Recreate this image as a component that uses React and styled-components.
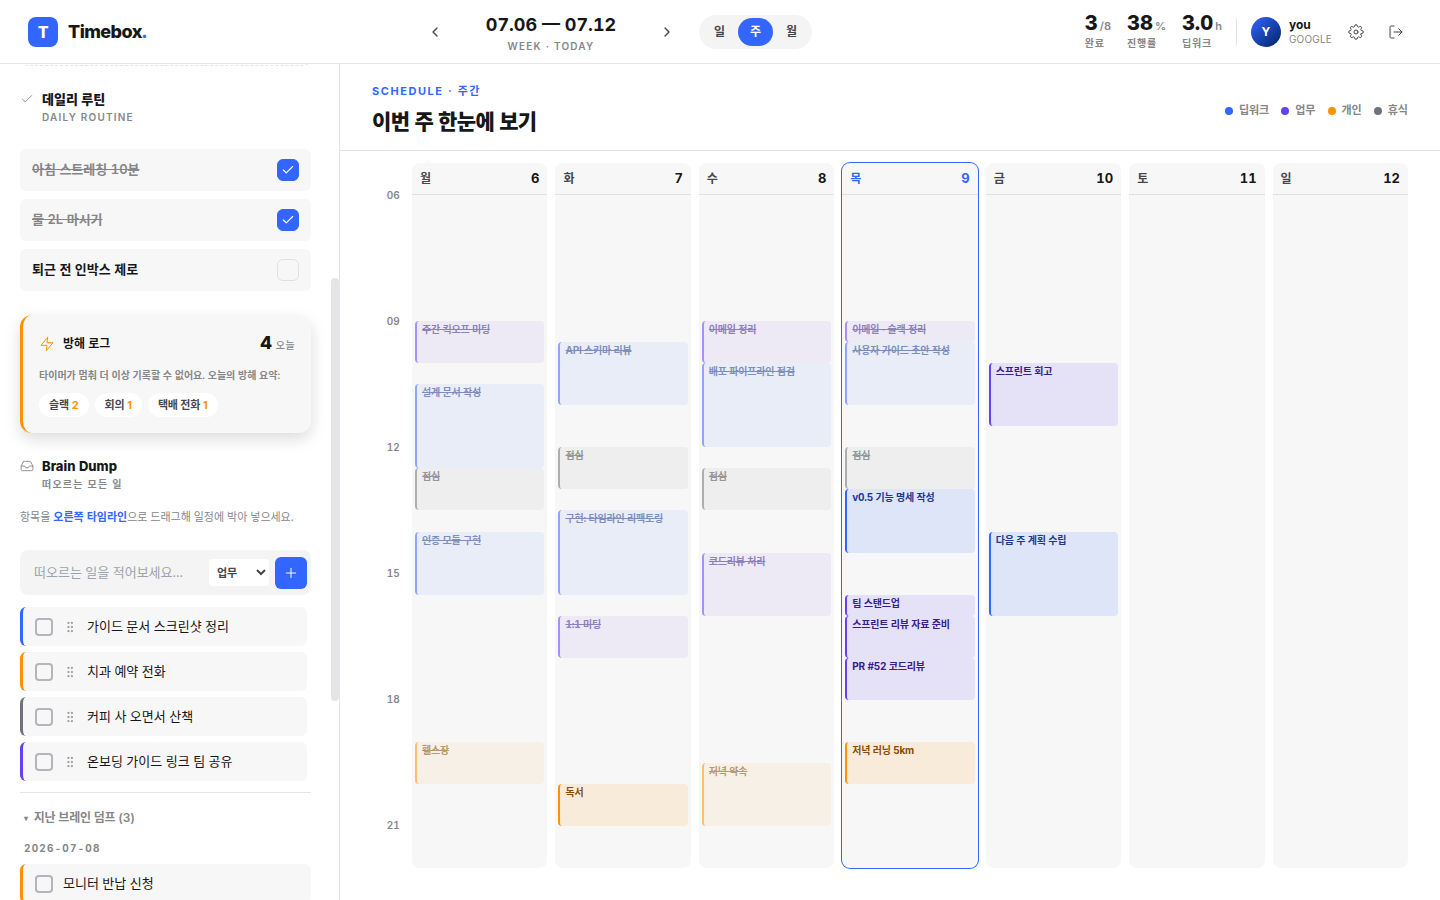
import React from "react";
import styled, { createGlobalStyle, css } from "styled-components";
import {
  FiCheck,
  FiChevronLeft,
  FiChevronRight,
  FiInbox,
  FiLogOut,
  FiPlus,
  FiSettings,
  FiZap,
} from "react-icons/fi";
import { GripVertical } from "lucide-react";

const gray = "#868689";
const line = "#e5e5e7";

const GlobalStyle = createGlobalStyle`
  *, *::before, *::after { box-sizing: border-box; }
  body {
    margin: 0;
    background: #fff;
    color: #171719;
    font-family: Inter, "Noto Sans CJK KR", sans-serif;
    font-size: 13px;
    line-height: 1.5;
    font-variant-numeric: tabular-nums;
  }
  button, input, select { font: inherit; color: inherit; margin: 0; }
  button { border: 0; padding: 0; background: none; cursor: pointer; }
  h1, h2, h3, p, ul { margin: 0; padding: 0; list-style: none; }
`;

const tones = {
  deep: { base: "#3366ff", tint: "rgba(51,102,255,.12)", ink: "#1a3a8f" },
  work: { base: "#6541f2", tint: "rgba(101,65,242,.12)", ink: "#36218a" },
  life: { base: "#ff9200", tint: "rgba(255,146,0,.12)", ink: "#8a4b00" },
  rest: { base: "#70737c", tint: "rgba(112,115,124,.12)", ink: "#46474c" },
};

const Page = styled.div`
  height: 100vh;
  display: flex;
  flex-direction: column;
`;

/* ---------- top bar ---------- */
const TopBar = styled.header`
  flex: none;
  height: 64px;
  padding: 0 28px;
  display: flex;
  align-items: center;
  justify-content: space-between;
  border-bottom: 1px solid ${line};
`;
const Brand = styled.a`
  display: flex;
  align-items: center;
  gap: 10px;
  color: inherit;
  text-decoration: none;
  font-size: 18px;
  font-weight: 800;
  letter-spacing: -0.03em;
`;
const BrandMark = styled.span`
  width: 30px;
  height: 30px;
  display: grid;
  place-items: center;
  border-radius: 8px;
  background: #3366ff;
  color: #fff;
  font-size: 16px;
`;
const Accent = styled.span`
  color: #3366ff;
`;
const NavGroup = styled.nav`
  display: flex;
  align-items: center;
  gap: 16px;
`;
const Stepper = styled.div`
  display: flex;
  align-items: center;
  gap: 10px;
`;
const IconButton = styled.button`
  width: 32px;
  height: 32px;
  display: grid;
  place-items: center;
  border-radius: 8px;
  color: #46474c;
  font-size: 16px;
`;
const RangeLabel = styled.div`
  width: 180px;
  display: flex;
  flex-direction: column;
  align-items: center;
`;
const RangeDates = styled.strong`
  font-size: 18px;
  line-height: 28px;
  font-weight: 700;
`;
const Caption = styled.span`
  font-size: 10px;
  line-height: ${(p) => p.$line || 14}px;
  font-weight: 600;
  letter-spacing: ${(p) => p.$track || "0.12em"};
  color: ${gray};
`;
const Segments = styled.div`
  display: flex;
  gap: 1px;
  padding: 3px;
  border-radius: 17px;
  background: #f4f4f5;
`;
const Segment = styled.button`
  height: 28px;
  padding: 0 12px;
  border-radius: 14px;
  font-size: 12px;
  font-weight: 600;
  color: ${(p) => (p.$active ? "#fff" : "#46474c")};
  background: ${(p) => (p.$active ? "#3366ff" : "transparent")};
`;
const AccountArea = styled.div`
  display: flex;
  align-items: center;
  gap: 14px;
`;
const Stats = styled.div`
  display: flex;
  gap: 16px;
`;
const Stat = styled.div`
  display: flex;
  flex-direction: column;
`;
const StatValue = styled.strong`
  font-size: 20px;
  line-height: 20px;
  font-weight: 800;
`;
const StatUnit = styled.span`
  margin-left: 2px;
  font-size: 11px;
  font-weight: 600;
  color: ${gray};
`;
const Divider = styled.div`
  width: 1px;
  height: 28px;
  background: ${line};
`;
const Account = styled.div`
  display: flex;
  align-items: center;
  gap: 8px;
`;
const Avatar = styled.span`
  width: 30px;
  height: 30px;
  display: grid;
  place-items: center;
  border-radius: 50%;
  background: linear-gradient(135deg, #3366ff, #002266);
  color: #fff;
  font-size: 12px;
  font-weight: 700;
`;
const AccountText = styled.span`
  display: flex;
  flex-direction: column;
  font-size: 12px;
  line-height: 15px;
  font-weight: 700;
`;
const Provider = styled.span`
  font-size: 10px;
  font-weight: 400;
  letter-spacing: 0.02em;
  color: ${gray};
`;

/* ---------- sidebar ---------- */
const Body = styled.div`
  flex: 1;
  min-height: 0;
  display: flex;
`;
const Sidebar = styled.aside`
  flex: none;
  width: 340px;
  display: flex;
  border-right: 1px solid ${line};
  overflow: hidden;
`;
const SideContent = styled.div`
  flex: 1;
  min-width: 0;
  padding: 0 20px;
`;
const Track = styled.div`
  width: 8px;
  display: flex;
  flex-direction: column;
`;
const TrackSpace = styled.div`
  flex: ${(p) => p.$share} 0 0;
`;
const Thumb = styled.div`
  flex: 423 0 0;
  border-radius: 4px;
  background: ${line};
`;
const DropZone = styled.div`
  height: 22px;
  margin-top: -20px;
  border: 1px dashed ${line};
  border-radius: 8px;
`;
const SectionHead = styled.div`
  display: grid;
  grid-template-columns: 14px 1fr;
  column-gap: 8px;
  align-items: center;
  margin-top: 23px;
  color: ${gray};
  font-size: 14px;
`;
const SectionTitle = styled.h2`
  font-size: 13px;
  line-height: 20px;
  font-weight: 800;
  color: #171719;
`;
const SectionNote = styled(Caption)`
  grid-column: 2;
`;
const RoutineList = styled.ul`
  margin-top: 24px;
  display: grid;
  gap: 8px;
`;
const Routine = styled.label`
  height: 42px;
  padding: 0 12px;
  display: flex;
  align-items: center;
  justify-content: space-between;
  border-radius: 6px;
  background: #f7f7f7;
  font-weight: 600;
  color: ${(p) => (p.$done ? gray : "#171719")};
  text-decoration: ${(p) => (p.$done ? "line-through" : "none")};
`;
const CheckWrap = styled.span`
  display: grid;
  place-items: center;
  color: #fff;
  font-size: 14px;
  > * { grid-area: 1 / 1; }
  > svg { pointer-events: none; z-index: 1; }
`;
const RoutineBox = styled.input`
  appearance: none;
  width: 22px;
  height: 22px;
  border: 1px solid #e0e0e2;
  border-radius: 6px;
  &:checked { background: #3366ff; border-color: #3366ff; }
`;
const LogCard = styled.section`
  margin-top: 24px;
  padding: 16px;
  border-left: 3px solid #ff9200;
  border-radius: 12px;
  background: #f7f7f7;
  box-shadow: 0 6px 16px rgba(0, 0, 0, 0.14);
`;
const LogHead = styled.div`
  height: 26px;
  display: flex;
  align-items: center;
  gap: 8px;
  color: #ff9200;
  font-size: 16px;
`;
const LogTitle = styled.h2`
  flex: 1;
  font-size: 12px;
  font-weight: 700;
  color: #171719;
`;
const LogCount = styled.strong`
  font-size: 18px;
  line-height: 26px;
  font-weight: 800;
  color: #171719;
`;
const LogUnit = styled.span`
  margin-left: 4px;
  font-size: 10px;
  font-weight: 500;
  letter-spacing: 0.04em;
  color: ${gray};
`;
const LogText = styled.p`
  margin-top: 8px;
  font-size: 10px;
  line-height: 20px;
  font-weight: 600;
  color: ${gray};
  white-space: nowrap;
`;
const Chips = styled.ul`
  margin-top: 8px;
  display: flex;
  gap: 6px;
`;
const Chip = styled.li`
  height: 24px;
  padding: 0 10px;
  border-radius: 12px;
  background: #fff;
  font-size: 11px;
  line-height: 24px;
  font-weight: 600;
  letter-spacing: -0.02em;
  font-variant-numeric: normal;
  color: #46474c;
`;
const ChipCount = styled.span`
  margin-left: 3px;
  font-weight: 700;
  color: #ff9200;
`;
const Hint = styled.p`
  margin-top: 14px;
  font-size: 11px;
  line-height: 22px;
  color: ${gray};
  white-space: nowrap;
  b { font-weight: 700; color: #3366ff; }
`;
const AddForm = styled.form`
  height: 45px;
  margin-top: 22px;
  padding: 0 4px 0 14px;
  display: flex;
  align-items: center;
  gap: 6px;
  border-radius: 8px;
  background: #f4f4f5;
`;
const AddInput = styled.input`
  flex: 1;
  min-width: 0;
  padding: 0;
  border: 0;
  outline: 0;
  background: none;
  &::placeholder { color: #9ca3af; }
`;
const AddSelect = styled.select`
  width: 60px;
  height: 27px;
  padding: 0 0 0 4px;
  border: 0;
  border-radius: 4px;
  background: #fff;
  font-size: 11px;
  font-weight: 600;
  color: #46474c;
`;
const AddButton = styled.button`
  width: 32px;
  height: 32px;
  display: grid;
  place-items: center;
  border-radius: 6px;
  background: #3366ff;
  color: #fff;
  font-size: 16px;
`;
const DumpList = styled.ul`
  margin-top: 12px;
  padding-right: ${(p) => (p.$inset ? 4 : 0)}px;
  display: grid;
  gap: 6px;
`;
const DumpItem = styled.li`
  height: 39px;
  padding-left: 12px;
  display: flex;
  align-items: center;
  gap: 10px;
  border-left: 3px solid ${(p) => tones[p.$tone].base};
  border-radius: 6px;
  background: #f7f7f7;
  color: ${gray};
`;
const DumpBox = styled.input`
  appearance: none;
  width: 18px;
  height: 18px;
  border: 2px solid #b4b4ba;
  border-radius: 4px;
`;
const DumpText = styled.label`
  color: #171719;
`;
const Past = styled.section`
  margin-top: 11px;
  padding-top: 15px;
  border-top: 1px solid ${line};
`;
const PastToggle = styled.button`
  display: flex;
  align-items: center;
  gap: 6px;
  padding: 0 4px;
  font-size: 12px;
  line-height: 20px;
  font-weight: 600;
  letter-spacing: -0.02em;
  color: ${gray};
`;
const PastArrow = styled.span`
  font-size: 8px;
`;
const PastDate = styled.h3`
  margin-top: 12px;
  padding-left: 4px;
  font-size: 10px;
  line-height: 16px;
  font-weight: 700;
  letter-spacing: 0.12em;
  color: ${gray};
`;
const PastList = styled(DumpList)`
  margin-top: 8px;
`;

/* ---------- schedule ---------- */
const Main = styled.main`
  flex: 1;
  min-width: 0;
  display: flex;
  flex-direction: column;
`;
const MainHead = styled.div`
  flex: none;
  padding: 17px 32px 12px;
  display: flex;
  align-items: center;
  justify-content: space-between;
  border-bottom: 1px solid ${line};
`;
const Kicker = styled.p`
  font-size: 11px;
  line-height: 20px;
  font-weight: 700;
  letter-spacing: 0.14em;
  color: #3366ff;
`;
const Title = styled.h1`
  margin-top: 5px;
  font-size: 21px;
  line-height: 32px;
  font-weight: 800;
  letter-spacing: -0.03em;
`;
const Legend = styled.ul`
  padding-top: 2px;
  display: flex;
  gap: 12px;
`;
const LegendItem = styled.li`
  display: flex;
  align-items: center;
  gap: 6px;
  font-size: 11px;
  font-weight: 600;
  color: ${gray};
  &::before {
    content: "";
    width: 8px;
    height: 8px;
    border-radius: 50%;
    background: ${(p) => tones[p.$tone].base};
  }
`;
const Week = styled.div`
  flex: 1;
  min-height: 0;
  padding: 12px 32px 32px;
  display: grid;
  grid-template-columns: 32px repeat(7, minmax(0, 1fr));
  gap: 8px;
`;
const Column = styled.div`
  min-height: 0;
  display: flex;
  flex-direction: column;
`;
const slots = css`
  flex: 1;
  min-height: 0;
  display: grid;
  grid-template-rows: repeat(32, minmax(0, 1fr));
`;
const Hours = styled(Column)`
  padding-top: 32px;
`;
const HourSlots = styled.div`
  ${slots}
`;
const Hour = styled.span`
  grid-row: ${(p) => p.$row};
  height: 0;
  padding-right: 4px;
  display: flex;
  align-items: center;
  justify-content: flex-end;
  font-size: 10px;
  font-weight: 600;
  letter-spacing: 0.02em;
  color: ${gray};
`;
const Day = styled(Column)`
  border-radius: 8px;
  background: #f7f7f7;
  box-shadow: ${(p) => (p.$today ? "0 0 0 1px #3366ff" : "none")};
`;
const DayHead = styled.div`
  flex: none;
  height: 32px;
  padding: 0 8px;
  display: flex;
  align-items: center;
  justify-content: space-between;
  border-bottom: 1px solid #e0e0e2;
  font-size: 12px;
  font-weight: 600;
  color: ${(p) => (p.$today ? "#3366ff" : "#46474c")};
`;
const DayNumber = styled.span`
  font-size: 13px;
  font-weight: 700;
  color: ${(p) => (p.$today ? "#3366ff" : "#171719")};
`;
const DaySlots = styled.div`
  ${slots}
  padding: 0 3px;
`;
const Event = styled.div`
  grid-row: ${(p) => p.$row} / span ${(p) => p.$span};
  padding: 2px 5px;
  border-left: 2px solid ${(p) => tones[p.$tone].base};
  border-radius: 4px;
  background: ${(p) => tones[p.$tone].tint};
  color: ${(p) => tones[p.$tone].ink};
  font-size: 10px;
  line-height: 13px;
  font-weight: 700;
  letter-spacing: -0.02em;
  white-space: nowrap;
  overflow: hidden;
  opacity: ${(p) => (p.$done ? 0.55 : 1)};
  text-decoration: ${(p) => (p.$done ? "line-through" : "none")};
`;

const week = [
  ["월", 6, [["work", 9, 10, "주간 킥오프 미팅", 1], ["deep", 10.5, 12.5, "설계 문서 작성", 1], ["rest", 12.5, 13.5, "점심", 1], ["deep", 14, 15.5, "인증 모듈 구현", 1], ["life", 19, 20, "헬스장", 1]]],
  ["화", 7, [["deep", 9.5, 11, "API 스키마 리뷰", 1], ["rest", 12, 13, "점심", 1], ["deep", 13.5, 15.5, "구현: 타임라인 리팩토링", 1], ["work", 16, 17, "1:1 미팅", 1], ["life", 20, 21, "독서", 0]]],
  ["수", 8, [["work", 9, 10, "이메일 정리", 1], ["deep", 10, 12, "배포 파이프라인 점검", 1], ["rest", 12.5, 13.5, "점심", 1], ["work", 14.5, 16, "코드리뷰 처리", 1], ["life", 19.5, 21, "저녁 약속", 1]]],
  ["목", 9, [["work", 9, 9.5, "이메일 · 슬랙 정리", 1], ["deep", 9.5, 11, "사용자 가이드 초안 작성", 1], ["rest", 12, 13, "점심", 1], ["deep", 13, 14.5, "v0.5 기능 명세 작성", 0], ["work", 15.5, 16, "팀 스탠드업", 0], ["work", 16, 17, "스프린트 리뷰 자료 준비", 0], ["work", 17, 18, "PR #52 코드리뷰", 0], ["life", 19, 20, "저녁 러닝 5km", 0]]],
  ["금", 10, [["work", 10, 11.5, "스프린트 회고", 0], ["deep", 14, 16, "다음 주 계획 수립", 0]]],
  ["토", 11, []],
  ["일", 12, []],
];
const rowOf = (hour) => (hour - 6) * 2 + 1;

const stats = [["3", "/8", "완료"], ["38", "%", "진행률"], ["3.0", "h", "딥워크"]];
const routines = [["아침 스트레칭 10분", true], ["물 2L 마시기", true], ["퇴근 전 인박스 제로", false]];
const interruptions = [["슬랙", 2], ["회의", 1], ["택배 전화", 1]];
const dumps = [["deep", "가이드 문서 스크린샷 정리"], ["life", "치과 예약 전화"], ["rest", "커피 사 오면서 산책"], ["work", "온보딩 가이드 링크 팀 공유"]];
const legend = [["deep", "딥워크"], ["work", "업무"], ["life", "개인"], ["rest", "휴식"]];

export default function App() {
  return (
    <>
      <GlobalStyle />
      <Page>
        <TopBar>
          <Brand href="#">
            <BrandMark>T</BrandMark>
            <span>Timebox<Accent>.</Accent></span>
          </Brand>
          <NavGroup>
            <Stepper>
              <IconButton aria-label="이전 주"><FiChevronLeft /></IconButton>
              <RangeLabel>
                <RangeDates>07.06 — 07.12</RangeDates>
                <Caption>WEEK · TODAY</Caption>
              </RangeLabel>
              <IconButton aria-label="다음 주"><FiChevronRight /></IconButton>
            </Stepper>
            <Segments>
              <Segment>일</Segment>
              <Segment $active>주</Segment>
              <Segment>월</Segment>
            </Segments>
          </NavGroup>
          <AccountArea>
            <Stats>
              {stats.map(([value, unit, name]) => (
                <Stat key={name}>
                  <StatValue>{value}<StatUnit>{unit}</StatUnit></StatValue>
                  <Caption $track="0.08em">{name}</Caption>
                </Stat>
              ))}
            </Stats>
            <Divider />
            <Account>
              <Avatar>Y</Avatar>
              <AccountText>you<Provider>GOOGLE</Provider></AccountText>
              <IconButton aria-label="설정"><FiSettings strokeWidth={1.5} /></IconButton>
              <IconButton aria-label="로그아웃"><FiLogOut strokeWidth={1.5} /></IconButton>
            </Account>
          </AccountArea>
        </TopBar>
        <Body>
          <Sidebar>
            <SideContent>
              <DropZone />
              <SectionHead>
                <FiCheck strokeWidth={1.5} />
                <SectionTitle>데일리 루틴</SectionTitle>
                <SectionNote $line={16}>DAILY ROUTINE</SectionNote>
              </SectionHead>
              <RoutineList>
                {routines.map(([text, done]) => (
                  <li key={text}>
                    <Routine $done={done}>
                      {text}
                      <CheckWrap>
                        <RoutineBox type="checkbox" defaultChecked={done} />
                        {done && <FiCheck strokeWidth={2} />}
                      </CheckWrap>
                    </Routine>
                  </li>
                ))}
              </RoutineList>
              <LogCard>
                <LogHead>
                  <FiZap strokeWidth={1.5} />
                  <LogTitle>방해 로그</LogTitle>
                  <LogCount>4<LogUnit>오늘</LogUnit></LogCount>
                </LogHead>
                <LogText>타이머가 멈춰 더 이상 기록할 수 없어요. 오늘의 방해 요약:</LogText>
                <Chips>
                  {interruptions.map(([name, count]) => (
                    <Chip key={name}>{name}<ChipCount>{count}</ChipCount></Chip>
                  ))}
                </Chips>
              </LogCard>
              <SectionHead>
                <FiInbox strokeWidth={1.5} />
                <SectionTitle>Brain Dump</SectionTitle>
                <SectionNote $line={16}>떠오르는 모든 일</SectionNote>
              </SectionHead>
              <Hint>항목을 <b>오른쪽 타임라인</b>으로 드래그해 일정에 박아 넣으세요.</Hint>
              <AddForm onSubmit={(e) => e.preventDefault()}>
                <AddInput aria-label="새 항목" placeholder="떠오르는 일을 적어보세요..." />
                <AddSelect aria-label="분류" defaultValue="업무">
                  {legend.map(([, name]) => <option key={name}>{name}</option>)}
                </AddSelect>
                <AddButton aria-label="추가"><FiPlus strokeWidth={1.5} /></AddButton>
              </AddForm>
              <DumpList $inset>
                {dumps.map(([tone, text], i) => (
                  <DumpItem key={text} $tone={tone}>
                    <DumpBox type="checkbox" id={`dump-${i}`} />
                    <GripVertical size={14} strokeWidth={1.5} aria-hidden="true" />
                    <DumpText htmlFor={`dump-${i}`}>{text}</DumpText>
                  </DumpItem>
                ))}
              </DumpList>
              <Past>
                <PastToggle><PastArrow>▾</PastArrow>지난 브레인 덤프 (3)</PastToggle>
                <PastDate>2026-07-08</PastDate>
                <PastList>
                  <DumpItem $tone="life">
                    <DumpBox type="checkbox" id="past-0" />
                    <DumpText htmlFor="past-0">모니터 반납 신청</DumpText>
                  </DumpItem>
                </PastList>
              </Past>
            </SideContent>
            <Track aria-hidden="true">
              <TrackSpace $share={214} />
              <Thumb />
              <TrackSpace $share={199} />
            </Track>
          </Sidebar>
          <Main>
            <MainHead>
              <div>
                <Kicker>SCHEDULE · 주간</Kicker>
                <Title>이번 주 한눈에 보기</Title>
              </div>
              <Legend>
                {legend.map(([tone, name]) => <LegendItem key={name} $tone={tone}>{name}</LegendItem>)}
              </Legend>
            </MainHead>
            <Week>
              <Hours>
                <HourSlots>
                  {[6, 9, 12, 15, 18, 21].map((h) => (
                    <Hour key={h} $row={rowOf(h)}>{String(h).padStart(2, "0")}</Hour>
                  ))}
                </HourSlots>
              </Hours>
              {week.map(([name, number, events]) => {
                const today = number === 9;
                return (
                  <Day key={number} $today={today}>
                    <DayHead $today={today}>{name}<DayNumber $today={today}>{number}</DayNumber></DayHead>
                    <DaySlots>
                      {events.map(([tone, start, end, text, done]) => (
                        <Event key={text} $tone={tone} $row={rowOf(start)} $span={(end - start) * 2} $done={done}>{text}</Event>
                      ))}
                    </DaySlots>
                  </Day>
                );
              })}
            </Week>
          </Main>
        </Body>
      </Page>
    </>
  );
}
